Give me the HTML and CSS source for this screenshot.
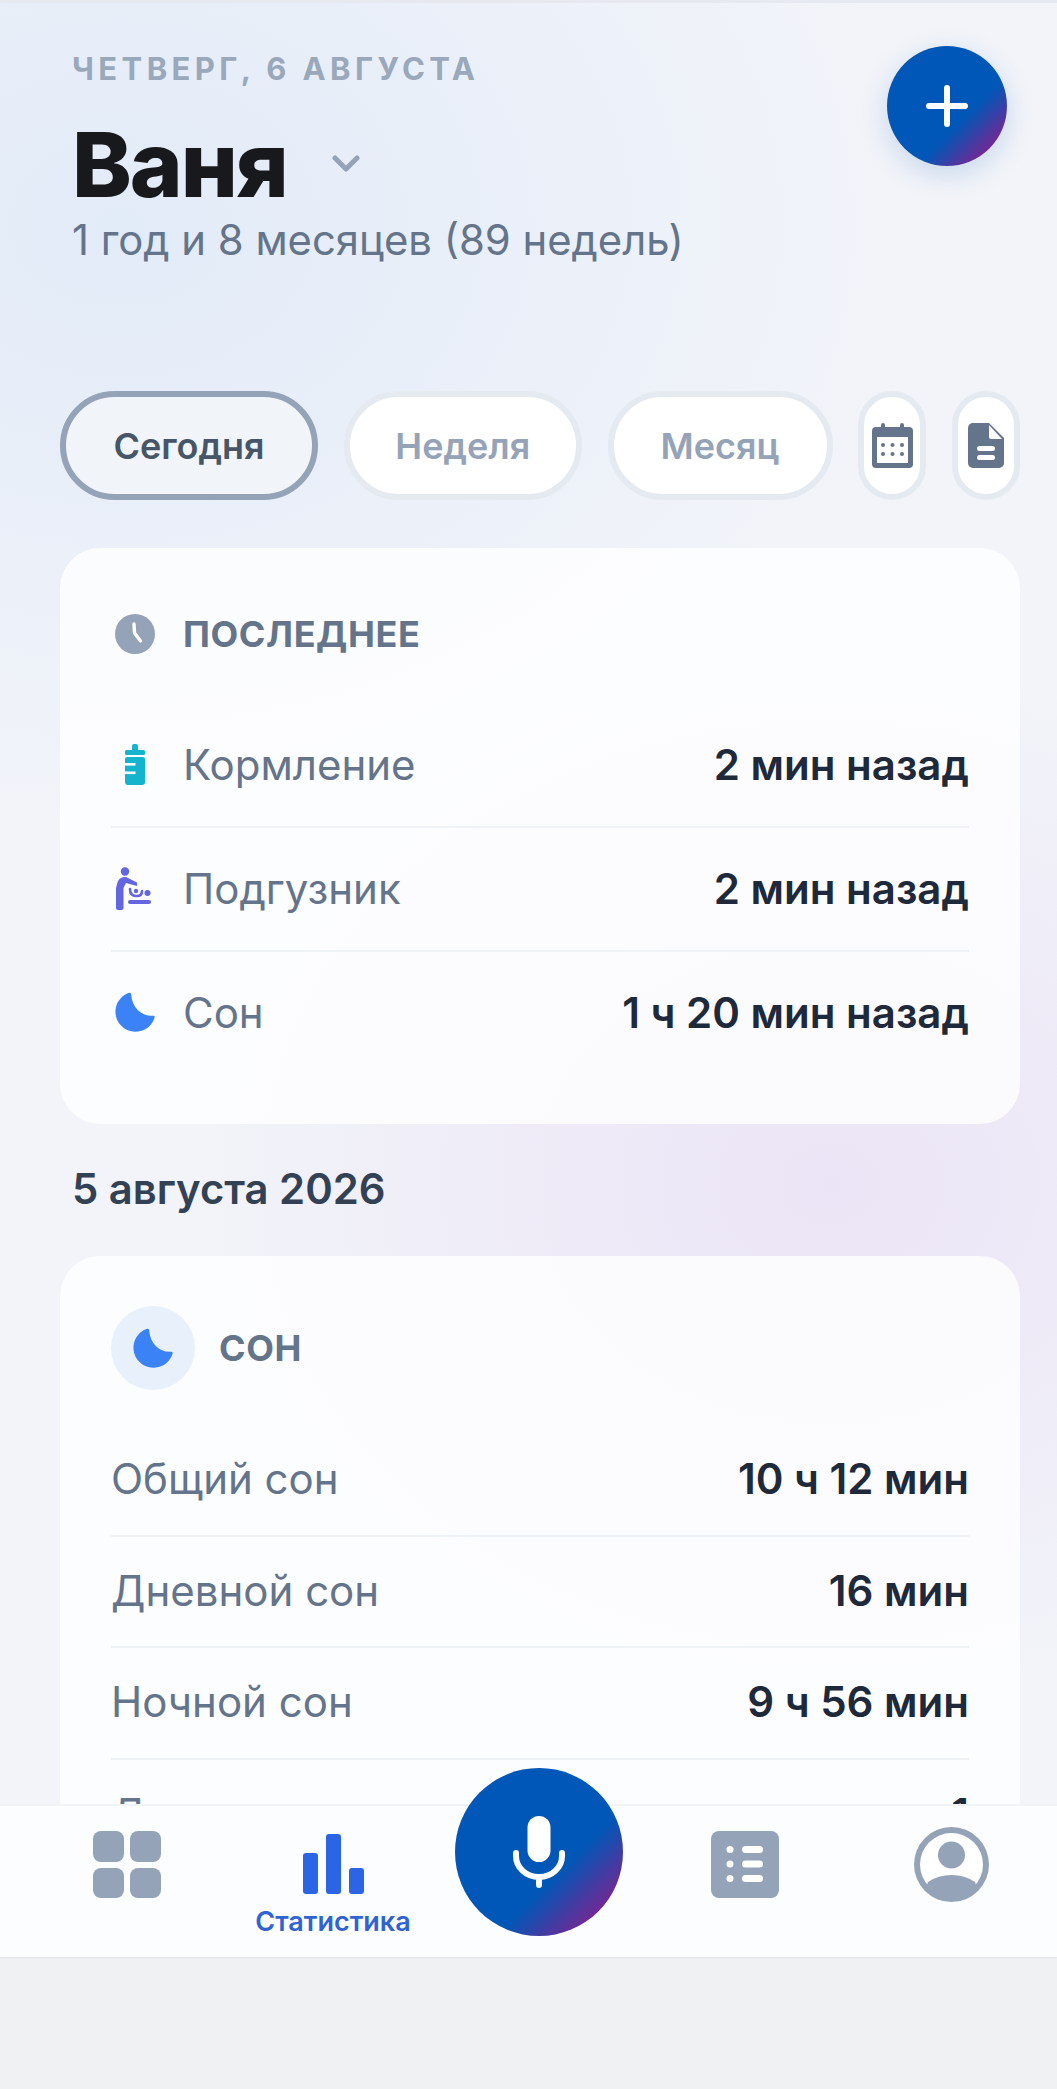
FILE: index.html
```html
<!DOCTYPE html>
<html lang="ru">
  <head>
    <meta charset="UTF-8" />
    <meta name="viewport" content="width=device-width, initial-scale=1.0" />
    <title>Статистика</title>
    <link rel="stylesheet" href="styles.css">
  </head>
  <body>
    <div class="screen">
      <div class="content">
        <header class="top">
          <div>
            <div class="today">Четверг, 6 августа</div>
            <div class="nameRow">
              <h1>Ваня</h1>
              <svg class="chevron" viewBox="0 0 28 18"><path d="M3 3l11 11L25 3" /></svg>
            </div>
            <div class="age">1 год и 8 месяцев (89 недель)</div>
          </div>
          <button class="addBtn" aria-label="Добавить">
            <svg viewBox="0 0 42 42"><path d="M21 3v36M3 21h36" /></svg>
          </button>
        </header>

        <div class="chips">
          <div class="chip active w1">Сегодня</div>
          <div class="chip w2">Неделя</div>
          <div class="chip w3">Месяц</div>
          <div class="chip iconChip">
            <svg width="41" height="45" viewBox="0 0 41 45">
              <path fill="#64748b" d="M4 4h5V2a2 2 0 0 1 4 0v2h15V2a2 2 0 0 1 4 0v2h5a4 4 0 0 1 4 4v33a4 4 0 0 1-4 4H4a4 4 0 0 1-4-4V8a4 4 0 0 1 4-4z" />
              <rect x="5" y="14" width="31" height="26" fill="#fff" />
              <g fill="#64748b">
                <circle cx="11" cy="22" r="2" /><circle cx="20.5" cy="22" r="2" /><circle cx="30" cy="22" r="2" />
                <circle cx="11" cy="31" r="2" /><circle cx="20.5" cy="31" r="2" /><circle cx="30" cy="31" r="2" />
              </g>
            </svg>
          </div>
          <div class="chip iconChip">
            <svg width="36" height="45" viewBox="0 0 36 45">
              <path fill="#64748b" d="M5 0h16l15 15v25a5 5 0 0 1-5 5H5a5 5 0 0 1-5-5V5a5 5 0 0 1 5-5z" />
              <path fill="#fff" d="M21 2l13 14H23a2 2 0 0 1-2-2z" />
              <rect x="9" y="23" width="18" height="5" rx="2.5" fill="#fff" />
              <rect x="9" y="32" width="18" height="5" rx="2.5" fill="#fff" />
            </svg>
          </div>
        </div>

        <section class="card recent">
          <div class="cardHead">
            <svg class="rowIcon" width="40" height="40" viewBox="0 0 40 40">
              <circle cx="20" cy="20" r="20" fill="#94a3b8" />
              <path d="M19 10l.5 9 6 8" fill="none" stroke="#fff" stroke-width="3.4" stroke-linecap="round" stroke-linejoin="round" />
            </svg>
            <span class="cardTitle">ПОСЛЕДНЕЕ</span>
          </div>
          <div class="row">
            <span class="rowLabel">
              <span class="iconBox narrow">
                <svg width="20" height="41" viewBox="0 0 20 41" fill="#14b4cf">
                  <rect x="7" y="0" width="6" height="8" rx="2" />
                  <rect x="0" y="6" width="20" height="5" rx="1.5" />
                  <path d="M2 13h16a2 2 0 0 1 2 2v23a3 3 0 0 1-3 3H3a3 3 0 0 1-3-3V15a2 2 0 0 1 2-2z" />
                  <rect x="0" y="19" width="10.500" height="2.600" fill="#fff" />
                  <rect x="0" y="27.500" width="10.500" height="2.600" fill="#fff" />
                </svg>
              </span>
              Кормление
            </span>
            <b>2 мин назад</b>
          </div>
          <div class="row">
            <span class="rowLabel">
              <span class="iconBox">
                <svg width="36" height="43" viewBox="0 0 36 43" fill="#6366e0">
                  <circle cx="10" cy="4.5" r="4.2" />
                  <path d="M2 17q1-6 7-7h2l11 5.5V19l-11-3-2.5 5V41q0 2-2 2H3q-2 0-2-2V21z" />
                  <path d="M15 22q0 7 6 7h1q5 0 5-5" fill="none" stroke="#6366e0" stroke-width="2.600" stroke-linecap="round" />
                  <circle cx="21" cy="24" r="2.200" />
                  <circle cx="32.500" cy="26" r="3" />
                  <rect x="13" y="33" width="23" height="4" rx="2" />
                </svg>
              </span>
              Подгузник
            </span>
            <b>2 мин назад</b>
          </div>
          <div class="row last">
            <span class="rowLabel">
              <span class="iconBox">
                <svg width="40" height="40" viewBox="0 0 40 40"><path fill="#3b82f6" d="M14 .8A20 20 0 1 0 39.600 25.500c.3-1.200-.6-1.900-1.700-1.800C27 24.500 17 16 16.200 2.400c-.1-1.200-1-1.900-2.200-1.600z" /></svg>
              </span>
              Сон
            </span>
            <b>1 ч 20 мин назад</b>
          </div>
        </section>

        <h2 class="dayTitle">5 августа 2026</h2>

        <section class="card sleep">
          <div class="cardHead">
            <span class="iconCircle">
              <svg width="40" height="40" viewBox="0 0 40 40"><path fill="#3b82f6" d="M14 .8A20 20 0 1 0 39.600 25.500c.3-1.200-.6-1.900-1.700-1.800C27 24.500 17 16 16.200 2.400c-.1-1.200-1-1.900-2.200-1.600z" /></svg>
            </span>
            <span class="cardTitle big">СОН</span>
          </div>
          <div class="stats">
            <div class="row short"><span class="rowLabel">Общий сон</span><b>10 ч 12 мин</b></div>
            <div class="row short"><span class="rowLabel">Дневной сон</span><b>16 мин</b></div>
            <div class="row short"><span class="rowLabel">Ночной сон</span><b>9 ч 56 мин</b></div>
            <div class="row short"><span class="rowLabel">Дневных снов</span><b>1</b></div>
          </div>
        </section>
      </div>

      <nav class="tabs">
        <a class="tab">
          <span class="tabIcon">
            <svg width="68" height="67" viewBox="0 0 68 67" fill="#94a3b8">
              <rect width="31" height="31" rx="8" /><rect x="37" width="31" height="31" rx="8" />
              <rect y="37" width="31" height="30" rx="8" /><rect x="37" y="37" width="31" height="30" rx="8" />
            </svg>
          </span>
        </a>
        <a class="tab current">
          <span class="tabIcon">
            <svg width="61" height="60" viewBox="0 0 61 60" fill="#2b65e5">
              <rect y="19" width="15" height="41" rx="3" /><rect x="23" width="15" height="60" rx="3" /><rect x="46" y="34" width="15" height="26" rx="3" />
            </svg>
          </span>
          <span class="tabLabel">Статистика</span>
        </a>
        <a class="tab micCell">
          <span class="micBtn">
            <svg width="52" height="72" viewBox="0 0 52 72" fill="none" stroke="#fff" stroke-width="6" stroke-linecap="round">
              <rect x="14.500" y="0" width="23" height="46" rx="11.500" fill="#fff" stroke="none" />
              <path d="M3 37v3a23 21 0 0 0 46 0v-3M26 61v8" />
            </svg>
          </span>
        </a>
        <a class="tab">
          <span class="tabIcon">
            <svg width="68" height="67" viewBox="0 0 68 67">
              <rect width="68" height="67" rx="8" fill="#94a3b8" />
              <g fill="#fff">
                <circle cx="19" cy="18.500" r="3.500" /><circle cx="19" cy="33" r="3.500" /><circle cx="19" cy="47.500" r="3.500" />
                <rect x="31" y="15" width="21" height="7" rx="3.500" /><rect x="31" y="29.500" width="21" height="7" rx="3.500" /><rect x="31" y="44" width="21" height="7" rx="3.500" />
              </g>
            </svg>
          </span>
        </a>
        <a class="tab">
          <span class="tabIcon">
            <svg width="75" height="75" viewBox="0 0 75 75">
              <circle cx="37.500" cy="37.500" r="37.500" fill="#94a3b8" />
              <circle cx="37.500" cy="37.500" r="31.500" fill="#fff" />
              <ellipse cx="37.500" cy="28" rx="13.500" ry="13.500" fill="#94a3b8" />
              <path fill="#94a3b8" d="M14 55q10-7 23.500-7T61 55l2 6-9 9H21l-9-9z" />
            </svg>
          </span>
        </a>
      </nav>
    </div>
  </body>
</html>
```

FILE: styles.css
```css
* {
  box-sizing: border-box;
}

body {
  margin: 0;
  height: 2089px;
  background-color: #f0f1f3;
  font-family: Inter, "Noto Sans", sans-serif;
  overflow: hidden;
}

.screen {
  height: 1957px;
  display: flex;
  flex-direction: column;
  border-top: 3px solid #e6e9ef;
  box-shadow: 0 1px 2px rgba(30, 41, 59, 0.08);
  background:
    radial-gradient(640px 520px at 830px 1180px, #ebe4f6 0%, rgba(235, 228, 246, 0) 100%),
    radial-gradient(800px 620px at 120px 220px, #e2ebf8 0%, rgba(226, 235, 248, 0) 100%),
    #f2f4f9;
}

.content {
  flex: 1;
  min-height: 0;
  overflow: hidden;
  padding: 49px 37px 0 60px;
}

/* header */
.top {
  display: flex;
  justify-content: space-between;
  align-items: flex-start;
  padding: 0 12px 0 12px;
}

.today {
  height: 34px;
  line-height: 34px;
  font-size: 31px;
  font-weight: 700;
  letter-spacing: 4.4px;
  text-transform: uppercase;
  color: #9aa8bb;
}

.nameRow {
  display: flex;
  align-items: center;
  margin-top: 29px;
  height: 100px;
}

h1 {
  margin: 0;
  font-size: 90px;
  line-height: 100px;
  font-weight: 800;
  letter-spacing: -2px;
  color: #18191c;
}

.chevron {
  width: 28px;
  height: 18px;
  margin-left: 45px;
  margin-top: -3px;
  fill: none;
  stroke: #94a3b8;
  stroke-width: 5;
  stroke-linecap: round;
  stroke-linejoin: round;
}

.age {
  height: 50px;
  line-height: 50px;
  font-size: 41.8px;
  color: #64748b;
}

.addBtn {
  width: 120px;
  height: 120px;
  margin-top: -6px;
  margin-right: 1px;
  padding: 0;
  border: 0;
  border-radius: 50%;
  display: flex;
  align-items: center;
  justify-content: center;
  background: linear-gradient(135deg, #0057b7 62%, #7d2390 88%);
  box-shadow: 0 8px 28px rgba(0, 87, 183, 0.18);
}

.addBtn svg {
  width: 42px;
  height: 42px;
  fill: none;
  stroke: #fff;
  stroke-width: 6;
  stroke-linecap: round;
}

/* period chips */
.chips {
  display: flex;
  justify-content: space-between;
  margin-top: 126px;
}

.chip {
  height: 109px;
  display: flex;
  align-items: center;
  justify-content: center;
  border: 6px solid #e5eaf1;
  border-radius: 55px;
  background-color: #fff;
  font-size: 36px;
  font-weight: 600;
  color: #94a3b8;
}

.chip.active {
  border-color: #94a3b8;
  background-color: #f1f5f9;
  color: #475569;
}

.w1 {
  width: 258px;
}

.w2 {
  width: 238px;
}

.w3 {
  width: 225px;
}

.iconChip {
  width: 68px;
}

/* cards */
.card {
  padding: 0 51px;
  border-radius: 40px;
  background-color: rgba(255, 255, 255, 0.78);
}

.recent {
  margin-top: 48px;
  padding-top: 66px;
  padding-bottom: 50px;
}

.sleep {
  padding-top: 50px;
  height: 700px;
}

.cardHead {
  display: flex;
  align-items: center;
}

.recent .cardHead {
  height: 40px;
  margin-bottom: 50px;
}

.rowIcon {
  margin-left: 4px;
  margin-right: 28px;
}

.cardTitle {
  font-size: 36px;
  font-weight: 700;
  letter-spacing: 0.6px;
  color: #64748b;
}

.cardTitle.big {
  font-size: 36px;
  margin-left: 24px;
}

.iconCircle {
  width: 84px;
  height: 84px;
  border-radius: 50%;
  display: flex;
  align-items: center;
  justify-content: center;
  background-color: #e8f0fc;
}

.row {
  height: 124px;
  padding-bottom: 2px;
  display: flex;
  align-items: center;
  justify-content: space-between;
  border-bottom: 2px solid #eff3f7;
  font-size: 42px;
}

.row.last {
  border-bottom: 0;
  height: 122px;
}

.row.short {
  height: 111.5px;
}

.rowLabel {
  display: flex;
  align-items: center;
  color: #64748b;
}

.row b {
  font-weight: 600;
  color: #1e293b;
}

.iconBox {
  width: 72px;
  padding-left: 4px;
  display: flex;
  align-items: center;
}

.iconBox.narrow {
  padding-left: 14px;
}

.iconBox svg {
  flex: none;
}

.stats {
  margin-top: 35px;
}

.dayTitle {
  margin: 41px 0 43px 12px;
  height: 48px;
  line-height: 48px;
  font-size: 41.8px;
  font-weight: 600;
  color: #334155;
}

/* bottom tabs */
.tabs {
  position: relative;
  flex: none;
  height: 153px;
  display: grid;
  grid-template-columns: repeat(5, 1fr);
  padding: 0 3px 0 24px;
  border-top: 2px solid #f1f3f6;
  background-color: #fcfdfe;
}

.tab {
  display: flex;
  flex-direction: column;
  align-items: center;
  padding-top: 20px;
}

.tabIcon {
  height: 76px;
  display: flex;
  align-items: center;
}

.tabLabel {
  margin-top: 5px;
  line-height: 30px;
  font-size: 27px;
  font-weight: 600;
  white-space: nowrap;
  color: #2f63d4;
}

.micCell {
  padding-top: 0;
}

.micBtn {
  width: 168px;
  height: 168px;
  margin-top: -38px;
  border-radius: 50%;
  display: flex;
  align-items: center;
  justify-content: center;
  background: linear-gradient(135deg, #0057b7 62%, #7d2390 88%);
}
```
